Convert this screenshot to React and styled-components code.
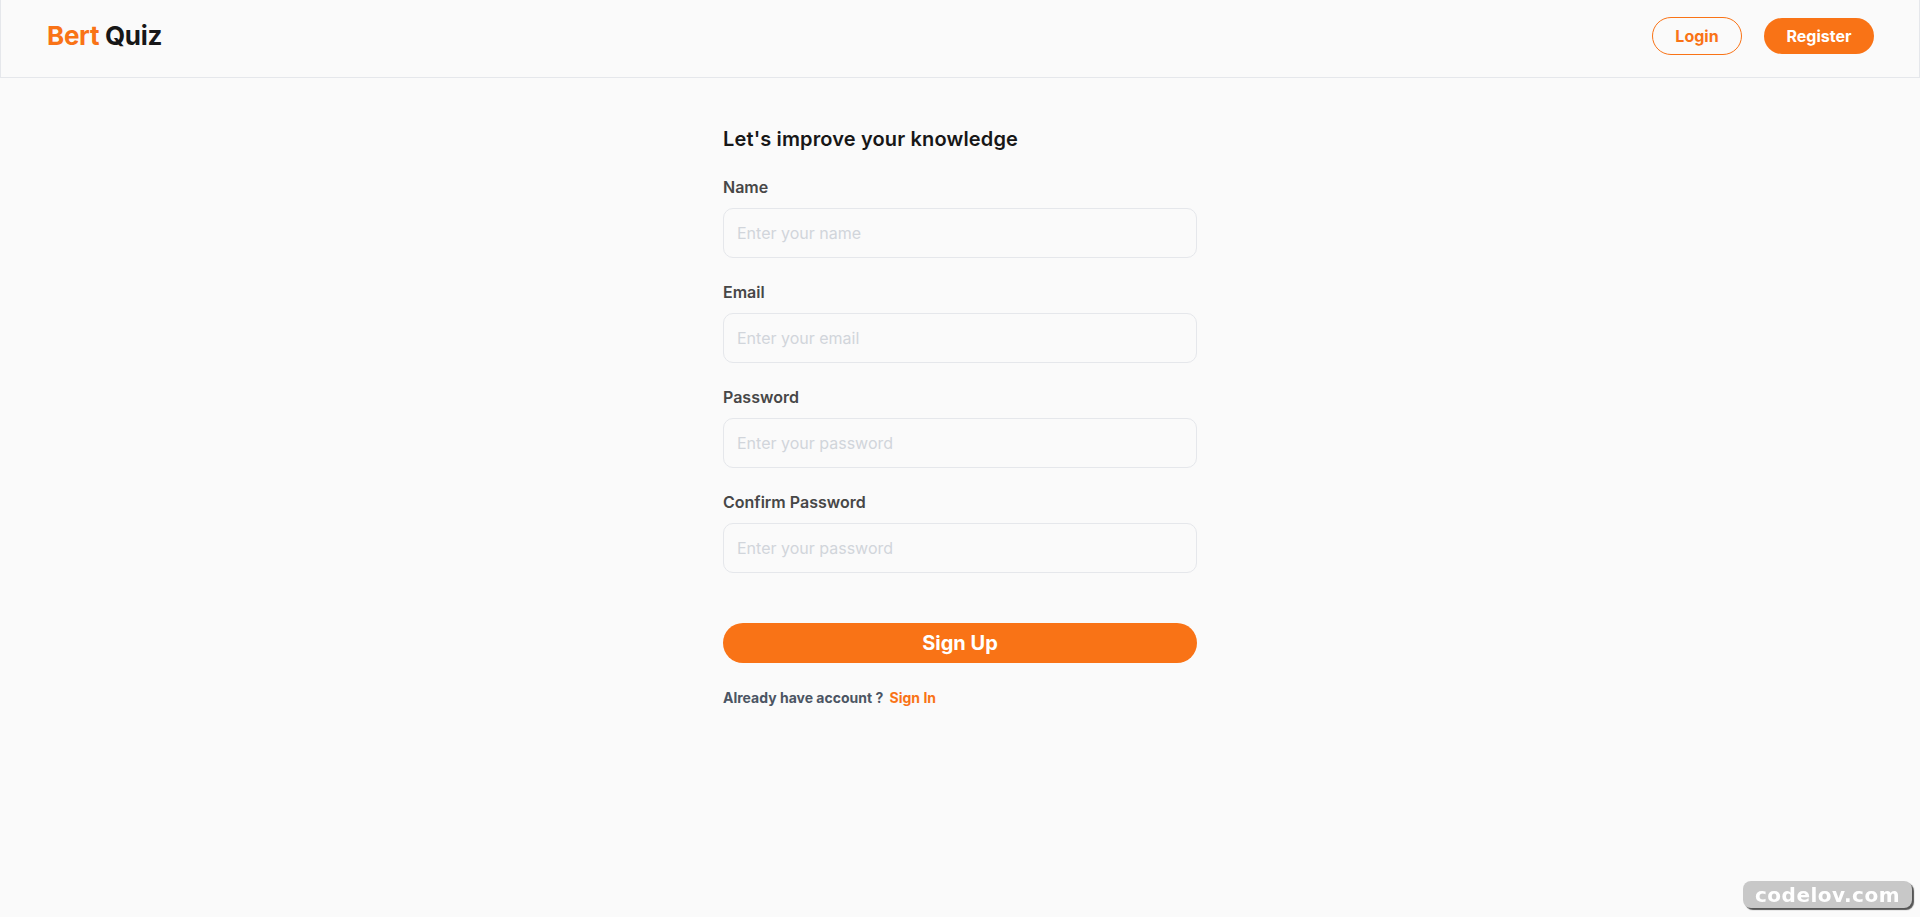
import React, { useState } from "react";
import styled, { createGlobalStyle } from "styled-components";

const ORANGE = "#f97316";
const BORDER = "#e5e7eb";

const GlobalStyle = createGlobalStyle`
  * {
    box-sizing: border-box;
  }
  body {
    margin: 0;
    background-color: #fafafa;
    font-family: Inter, "Noto Sans", sans-serif;
  }
`;

export default function App() {
  const [form, setForm] = useState({
    name: "",
    email: "",
    password: "",
    confirmPassword: "",
  });

  const handleChange = (e) => {
    setForm({ ...form, [e.target.name]: e.target.value });
  };

  const fields = [
    { name: "name", label: "Name", type: "text", placeholder: "Enter your name" },
    { name: "email", label: "Email", type: "email", placeholder: "Enter your email" },
    { name: "password", label: "Password", type: "password", placeholder: "Enter your password" },
    {
      name: "confirmPassword",
      label: "Confirm Password",
      type: "password",
      placeholder: "Enter your password",
    },
  ];

  return (
    <>
      <GlobalStyle />
      <Page>
        <Header>
          <Logo>
            <span className="accent">Bert</span> Quiz
          </Logo>
          <Nav>
            <OutlineButton type="button">Login</OutlineButton>
            <FilledButton type="button">Register</FilledButton>
          </Nav>
        </Header>

        <Main>
          <Form onSubmit={(e) => e.preventDefault()}>
            <Title>Let's improve your knowledge</Title>
            <Fields>
              {fields.map((field) => (
                <Field key={field.name}>
                  <Label htmlFor={field.name}>{field.label}</Label>
                  <Input
                    id={field.name}
                    name={field.name}
                    type={field.type}
                    placeholder={field.placeholder}
                    value={form[field.name]}
                    onChange={handleChange}
                  />
                </Field>
              ))}
            </Fields>
            <SubmitButton type="submit">Sign Up</SubmitButton>
            <Switch>
              Already have account ? <a href="#signin">Sign In</a>
            </Switch>
          </Form>
        </Main>

        <Watermark>codelov.com</Watermark>
      </Page>
    </>
  );
}

const Page = styled.div`
  min-height: 917px;
  background-color: #fafafa;
`;

const Header = styled.header`
  display: flex;
  justify-content: space-between;
  align-items: center;
  height: 78px;
  padding: 0 45px 6px 46px;
  border: 1px solid ${BORDER};
  border-top: none;
`;

const Logo = styled.div`
  font-size: 26px;
  font-weight: 700;
  color: #171717;
  letter-spacing: -0.3px;

  .accent {
    color: ${ORANGE};
  }
`;

const Nav = styled.nav`
  display: flex;
  align-items: center;
  gap: 22px;
`;

const OutlineButton = styled.button`
  width: 90px;
  height: 38px;
  border: 1px solid ${ORANGE};
  border-radius: 19px;
  background: transparent;
  color: ${ORANGE};
  font-family: inherit;
  font-size: 16px;
  font-weight: 700;
  cursor: pointer;
`;

const FilledButton = styled.button`
  width: 110px;
  height: 36px;
  border: none;
  border-radius: 18px;
  background-color: ${ORANGE};
  color: #fff;
  font-family: inherit;
  font-size: 16px;
  font-weight: 700;
  cursor: pointer;
`;

const Main = styled.main`
  display: flex;
  justify-content: center;
  padding-top: 47px;
`;

const Form = styled.form`
  display: flex;
  flex-direction: column;
  width: 474px;
`;

const Title = styled.h1`
  margin: 0 0 22px;
  font-size: 20px;
  line-height: 28px;
  font-weight: 600;
  letter-spacing: 0.15px;
  color: #171717;
`;

const Fields = styled.div`
  display: flex;
  flex-direction: column;
  gap: 22px;
`;

const Field = styled.div`
  display: flex;
  flex-direction: column;
  gap: 9px;
`;

const Label = styled.label`
  font-size: 16px;
  line-height: 24px;
  font-weight: 600;
  color: #474747;
`;

const Input = styled.input`
  height: 50px;
  padding: 0 13px;
  border: 1px solid ${BORDER};
  border-radius: 10px;
  background-color: #fafafa;
  font-family: inherit;
  font-size: 16px;
  color: #171717;
  outline: none;

  &::placeholder {
    color: #d1d5db;
  }

  &:focus {
    border-color: ${ORANGE};
  }
`;

const SubmitButton = styled.button`
  margin-top: 50px;
  height: 40px;
  border: none;
  border-radius: 20px;
  background-color: ${ORANGE};
  color: #fff;
  font-family: inherit;
  font-size: 20px;
  font-weight: 700;
  cursor: pointer;
`;

const Switch = styled.p`
  margin: 25px 0 0;
  font-size: 14px;
  line-height: 20px;
  font-weight: 700;
  color: #4b5563;

  a {
    margin-left: 3px;
    color: ${ORANGE};
    text-decoration: none;
  }
`;

const Watermark = styled.div`
  position: fixed;
  right: 8px;
  bottom: 9px;
  width: 169px;
  height: 27px;
  display: flex;
  align-items: center;
  justify-content: center;
  border-radius: 8px;
  background-color: #c8c8c8;
  box-shadow: 2px 2px 1px #555;
  color: #fff;
  font-family: "DejaVu Sans", sans-serif;
  font-size: 20px;
  font-weight: 700;
  letter-spacing: 0.5px;
`;
